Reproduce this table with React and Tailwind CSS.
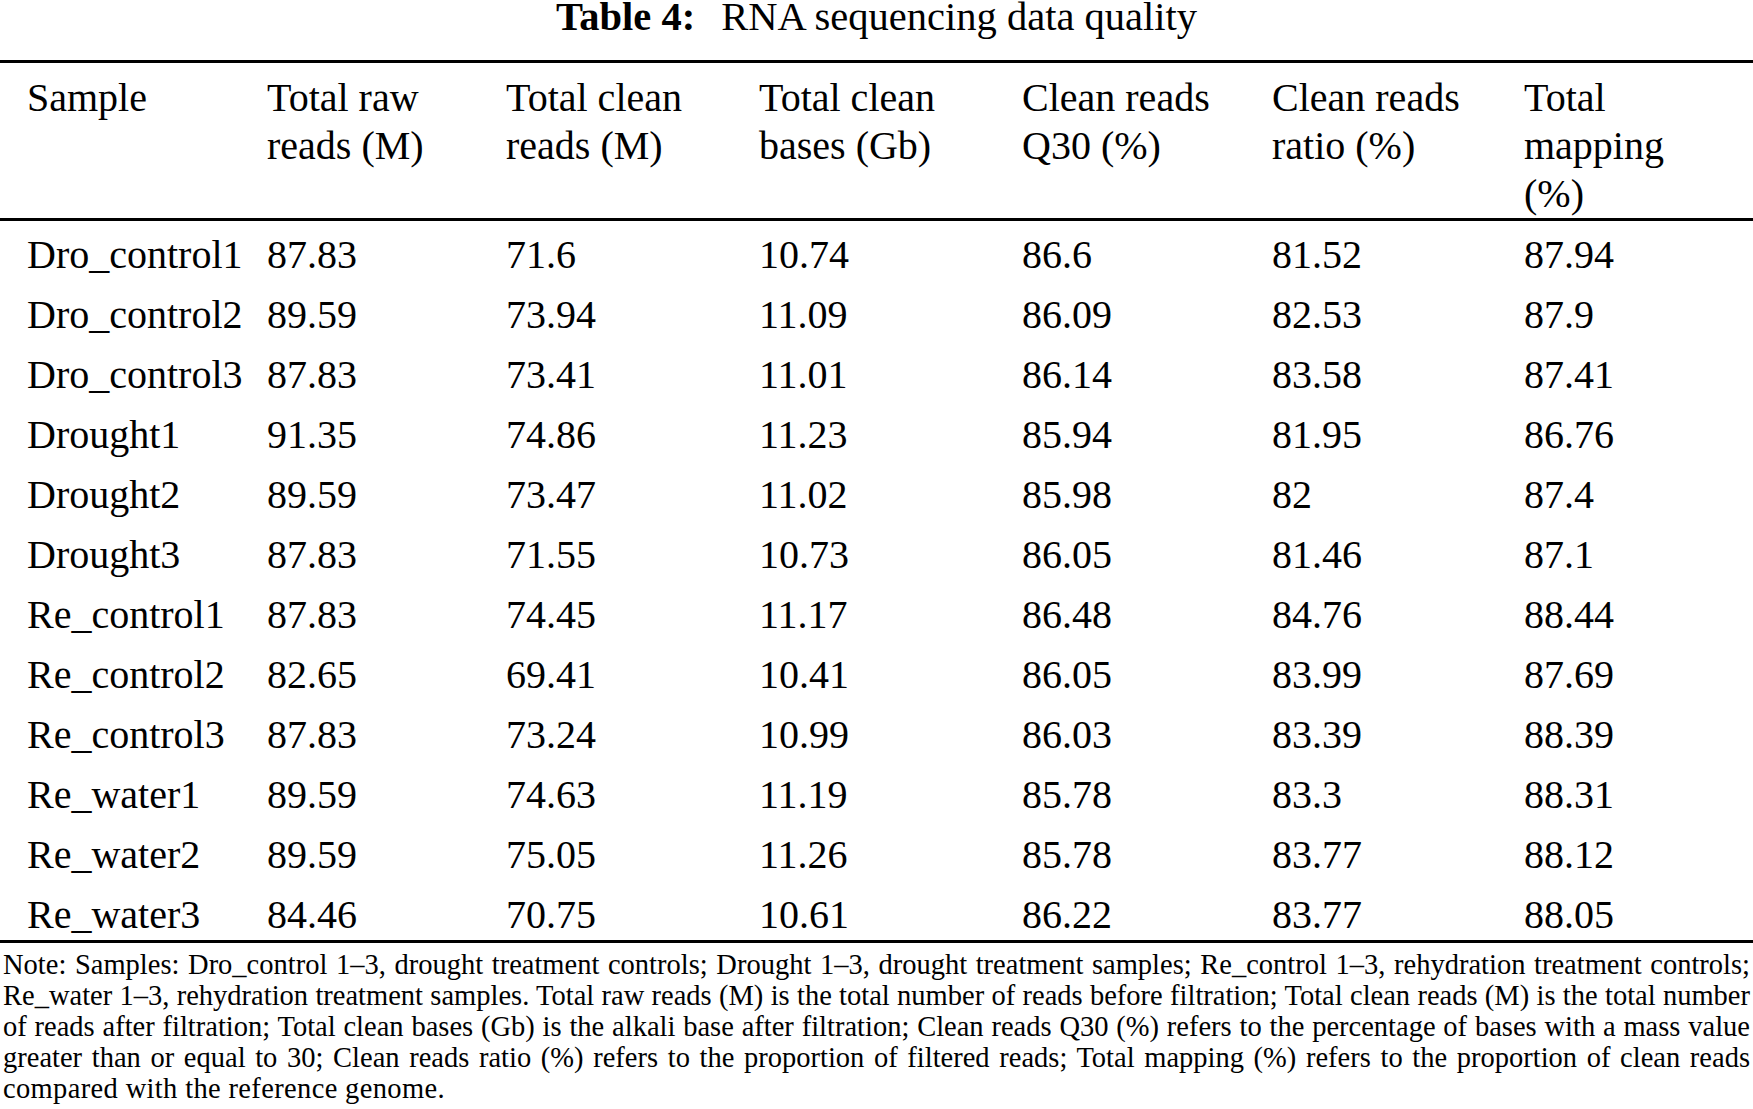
import React from "react";

const headers = [
  ["Sample"],
  ["Total raw", "reads (M)"],
  ["Total clean", "reads (M)"],
  ["Total clean", "bases (Gb)"],
  ["Clean reads", "Q30 (%)"],
  ["Clean reads", "ratio (%)"],
  ["Total", "mapping", "(%)"],
];

const rows = [
  ["Dro_control1", "87.83", "71.6", "10.74", "86.6", "81.52", "87.94"],
  ["Dro_control2", "89.59", "73.94", "11.09", "86.09", "82.53", "87.9"],
  ["Dro_control3", "87.83", "73.41", "11.01", "86.14", "83.58", "87.41"],
  ["Drought1", "91.35", "74.86", "11.23", "85.94", "81.95", "86.76"],
  ["Drought2", "89.59", "73.47", "11.02", "85.98", "82", "87.4"],
  ["Drought3", "87.83", "71.55", "10.73", "86.05", "81.46", "87.1"],
  ["Re_control1", "87.83", "74.45", "11.17", "86.48", "84.76", "88.44"],
  ["Re_control2", "82.65", "69.41", "10.41", "86.05", "83.99", "87.69"],
  ["Re_control3", "87.83", "73.24", "10.99", "86.03", "83.39", "88.39"],
  ["Re_water1", "89.59", "74.63", "11.19", "85.78", "83.3", "88.31"],
  ["Re_water2", "89.59", "75.05", "11.26", "85.78", "83.77", "88.12"],
  ["Re_water3", "84.46", "70.75", "10.61", "86.22", "83.77", "88.05"],
];

const noteLines = [
  "Note: Samples: Dro_control 1–3, drought treatment controls; Drought 1–3, drought treatment samples; Re_control 1–3, rehydration treatment controls;",
  "Re_water 1–3, rehydration treatment samples. Total raw reads (M) is the total number of reads before filtration; Total clean reads (M) is the total number",
  "of reads after filtration; Total clean bases (Gb) is the alkali base after filtration; Clean reads Q30 (%) refers to the percentage of bases with a mass value",
  "greater than or equal to 30; Clean reads ratio (%) refers to the proportion of filtered reads; Total mapping (%) refers to the proportion of clean reads",
];

const cols = "grid grid-cols-[240px_239px_253px_263px_250px_252px_1fr] pl-[27px]";

export default function App() {
  return (
    <div className="w-[1753px] h-[1109px] bg-white text-black font-['Liberation_Serif',serif] overflow-hidden">
      <div className="text-center text-[40.5px] leading-[34px] whitespace-nowrap">
        <span className="font-bold">Table 4:</span>
        <span className="ml-[26px]">RNA sequencing data quality</span>
      </div>
      <div className="mt-[26px] border-t-[3px] border-black" />
      <div className={`${cols} pt-[11px] text-[40px] leading-[48px]`}>
        {headers.map((h, i) => (
          <div key={i} className="whitespace-nowrap">
            {h.map((l, j) => (
              <div key={j}>{l}</div>
            ))}
          </div>
        ))}
      </div>
      <div className="border-t-[3px] border-black" />
      <div className="pt-[4px]">
        {rows.map((r, i) => (
          <div
            key={i}
            className={`${cols} text-[40px] leading-[60px] ${i === rows.length - 1 ? "h-[55px]" : "h-[60px]"}`}
          >
            {r.map((c, j) => (
              <div key={j} className="whitespace-nowrap">
                {c}
              </div>
            ))}
          </div>
        ))}
      </div>
      <div className="border-t-[3px] border-black" />
      <div className="pt-[6px] px-[3px] text-[28.5px] leading-[31px]">
        {noteLines.map((l, i) => (
          <div key={i} className="text-justify [text-align-last:justify] whitespace-nowrap">
            {l}
          </div>
        ))}
        <div className="tracking-[0.35px]">compared with the reference genome.</div>
      </div>
    </div>
  );
}
